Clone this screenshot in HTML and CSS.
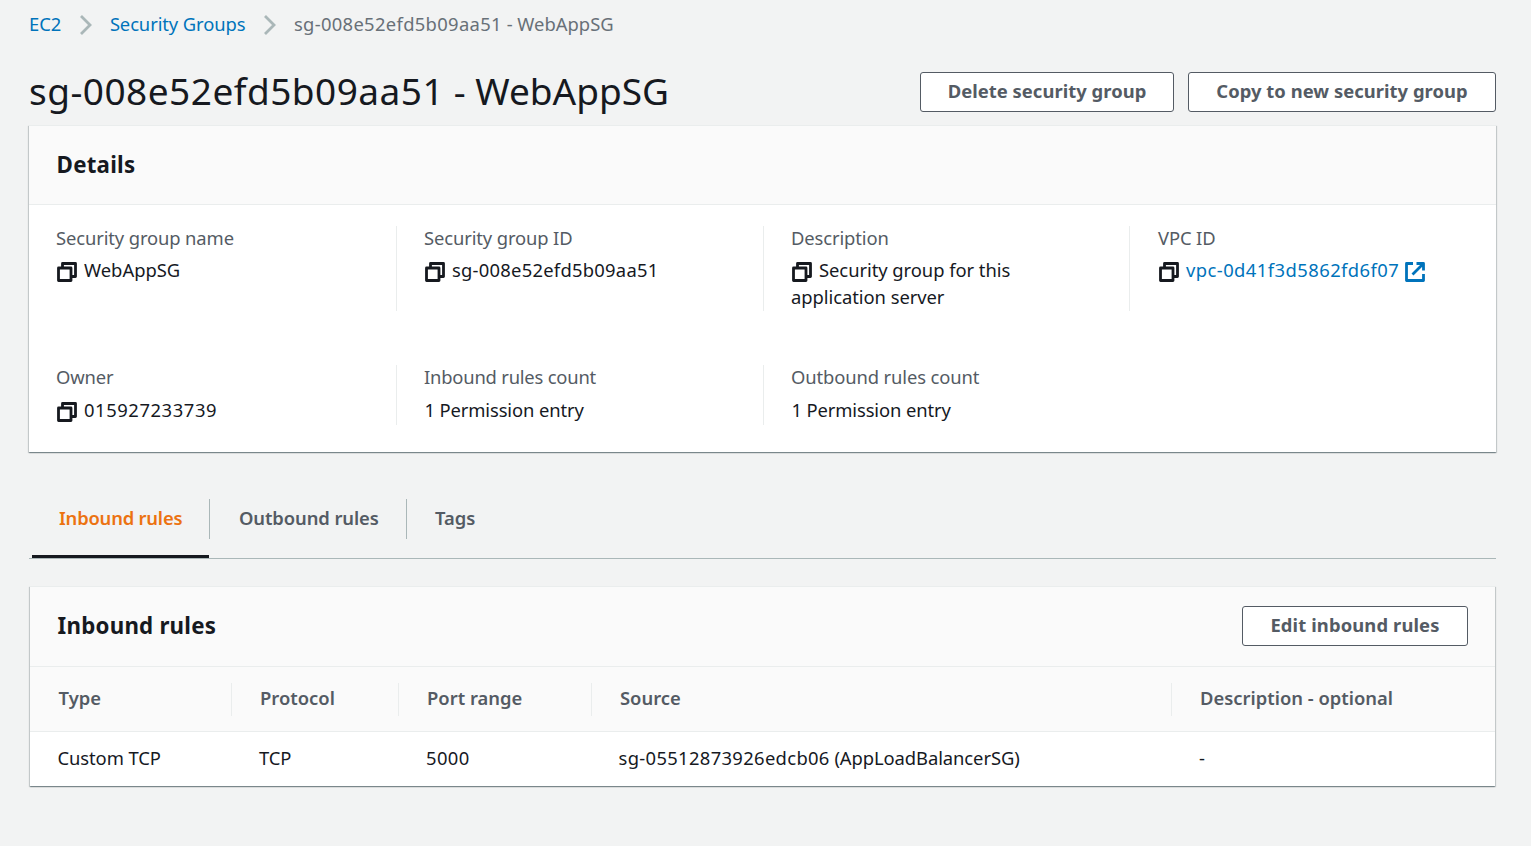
FILE: index.html
```html
<!DOCTYPE html>
<html lang="en">
<head>
<meta charset="utf-8">
<title>sg-008e52efd5b09aa51 - WebAppSG</title>
<link rel="stylesheet" href="styles.css">
</head>
<body>
<svg class="sprite" aria-hidden="true">
  <symbol id="copy" viewBox="0 0 20 20"><path d="M5.5 5V1.5h13v13H15M1.5 6h12.5v12.5H1.5z"/></symbol>
  <symbol id="external" viewBox="0 0 20 20"><path d="M8 1.5H1.5v17h17V12M11.5 1.5h7v7M18 2 7.5 12.5"/></symbol>
  <symbol id="chevron" viewBox="0 0 14 22"><path d="M2 2l9 9-9 9"/></symbol>
</svg>
<nav class="breadcrumbs">
  <a class="link">EC2</a>
  <svg class="chevron"><use href="#chevron"/></svg>
  <a class="link crumb-groups">Security Groups</a>
  <svg class="chevron"><use href="#chevron"/></svg>
  <span class="current"><span class="current-id">sg-008e52efd5b09aa51</span> - WebAppSG</span>
</nav>
<header class="page-header">
  <h1 class="title"><span class="title-id">sg-008e52efd5b09aa51</span> - WebAppSG</h1>
  <div class="actions">
    <button class="button button-delete">Delete security group</button>
    <button class="button button-copy">Copy to new security group</button>
  </div>
</header>
<section class="card details">
  <div class="card-header"><h2 class="heading-details">Details</h2></div>
  <div class="detail-grid">
    <div class="field"><div class="label">Security group name</div><div class="value"><svg class="icon"><use href="#copy"/></svg>WebAppSG</div></div>
    <div class="field"><div class="label">Security group ID</div><div class="value"><svg class="icon"><use href="#copy"/></svg><span class="group-id">sg-008e52efd5b09aa51</span></div></div>
    <div class="field"><div class="label">Description</div><div class="value value-description"><svg class="icon"><use href="#copy"/></svg>Security group for this<br>application server</div></div>
    <div class="field"><div class="label">VPC ID</div><div class="value"><svg class="icon"><use href="#copy"/></svg><a class="link"><span class="vpc-id">vpc-0d41f3d5862fd6f07</span><svg class="icon icon-external"><use href="#external"/></svg></a></div></div>
    <div class="field"><div class="label">Owner</div><div class="value"><svg class="icon"><use href="#copy"/></svg><span class="owner-id">015927233739</span></div></div>
    <div class="field"><div class="label label-count">Inbound rules count</div><div class="value value-count">1 Permission entry</div></div>
    <div class="field"><div class="label">Outbound rules count</div><div class="value value-count">1 Permission entry</div></div>
  </div>
</section>
<nav class="tabs">
  <a class="tab tab-active">Inbound rules</a>
  <a class="tab tab-outbound">Outbound rules</a>
  <a class="tab tab-tags">Tags</a>
</nav>
<section class="card rules">
  <div class="card-header"><h2>Inbound rules</h2><button class="button button-edit">Edit inbound rules</button></div>
  <div class="row head">
    <div class="cell">Type</div><div class="cell">Protocol</div><div class="cell">Port range</div><div class="cell">Source</div><div class="cell">Description - optional</div>
  </div>
  <div class="row">
    <div class="cell cell-type">Custom TCP</div><div class="cell">TCP</div><div class="cell cell-port">5000</div><div class="cell cell-source"><span class="source-id">sg-05512873926edcb06</span> (AppLoadBalancerSG)</div><div class="cell">-</div>
  </div>
</section>
</body>
</html>
```
FILE: styles.css
```css
* { box-sizing: border-box; }
body { margin: 0; min-height: 100vh; padding: 0 35px 0 29px; background: #f2f3f3; color: #16191f; font: 18.4px/27px "Noto Sans", sans-serif; }
.sprite { position: absolute; width: 0; height: 0; }
svg { fill: none; stroke: currentColor; }
.link { color: #0073bb; }
.breadcrumbs { display: flex; align-items: center; height: 47px; color: #687078; }
.crumb-groups { letter-spacing: -.1px; }
.current { letter-spacing: 0; }
.current-id { letter-spacing: .32px; }
.chevron { width: 14px; height: 22px; margin: 2px 17px 0 17.5px; color: #aab7b8; stroke-width: 2.8; }
.page-header { display: flex; justify-content: space-between; height: 78px; padding-top: 25px; }
.title { margin: -1px 0 0; font-size: 37px; font-weight: 400; line-height: 40px; letter-spacing: 0; }
.title-id { letter-spacing: .48px; }
.actions { display: flex; gap: 14px; }
.button { width: 254px; height: 40px; padding: 0 0 2px; border: 1px solid #545b64; border-radius: 3px; background: #fff; color: #545b64; font: 700 18.4px/36px "Noto Sans", sans-serif; letter-spacing: .04px; white-space: nowrap; }
.button-copy { width: 308px; }
.button-edit { width: 226px; letter-spacing: .12px; }
.card { background: #fff; box-shadow: 0 1px 1px 0 rgba(0,28,36,.3), 1px 1px 1px 0 rgba(0,28,36,.15), -1px 1px 1px 0 rgba(0,28,36,.15); border-top: 1px solid #eaeded; }
.card-header { display: flex; align-items: center; justify-content: space-between; height: 79px; padding: 0 27px; background: #fafafa; border-bottom: 1px solid #eaeded; }
h2 { margin: 0 0 2px .6px; font-size: 22.3px; font-weight: 700; letter-spacing: .22px; }
.details { height: 327px; }
.detail-grid { display: grid; grid-template-columns: 368px 367px 366px 366px; grid-template-rows: 85px 60px; row-gap: 54px; padding-top: 21px; }
.field { padding-left: 27px; border-right: 1px solid #eaeded; }
.field:nth-child(4) { padding-left: 28px; }
.field:nth-child(4), .field:nth-child(7) { border: 0; }
.label { color: #545b64; margin: -2px 0 5px; letter-spacing: -.12px; }
.label-count { letter-spacing: -.2px; }
.field:nth-child(n+5) .label { margin-bottom: 6px; }
.value-description { letter-spacing: -.05px; }
.value-count { padding-left: .5px; letter-spacing: -.12px; }
.group-id { letter-spacing: .25px; }
.vpc-id { letter-spacing: .44px; }
.owner-id { letter-spacing: .57px; }
.icon { width: 20px; height: 20px; margin: 0 7.3px 0 .7px; vertical-align: -5px; stroke-width: 2.8; stroke-linejoin: round; }
.icon-external { margin: 0 0 0 6px; }
.tabs { display: flex; height: 60px; margin-top: 47px; border-bottom: 1px solid #aab7b8; padding-left: 3px; }
.tab { height: 40px; color: #545b64; font-weight: 600; line-height: 38px; }
.tab-active { position: relative; width: 178px; padding-left: 27px; border-right: 1px solid #aab7b8; color: #ec7211; letter-spacing: -.2px; }
.tab-active::after { content: ""; position: absolute; left: 0; right: 0; top: 56px; height: 3px; background: #16191f; }
.tab-outbound { width: 197px; padding-left: 29px; border-right: 1px solid #aab7b8; letter-spacing: -.1px; }
.tab-tags { padding-left: 28px; }
.rules { margin: 27px 1px 0; }
.rules .card-header { height: 80px; padding-bottom: 1px; }
.row { display: grid; grid-template-columns: 202px 167px 193px 580px 1fr; height: 54px; align-items: center; }
.head { height: 65px; background: #fafafa; border-bottom: 1px solid #eaeded; color: #545b64; font-weight: 600; }
.cell { padding: 0 0 4px 27px; letter-spacing: -.08px; }
.cell-type { padding-left: 27.5px; }
.cell-port { letter-spacing: .4px; }
.cell-source { padding-left: 26.5px; letter-spacing: -.08px; }
.source-id { letter-spacing: .33px; }
.head .cell { height: 33px; padding: 1px 0 5px 28px; border-right: 1px solid #eaeded; letter-spacing: 0; }
.head .cell:first-child { padding-left: 28.6px; }
.head .cell:last-child { border: 0; }
```
